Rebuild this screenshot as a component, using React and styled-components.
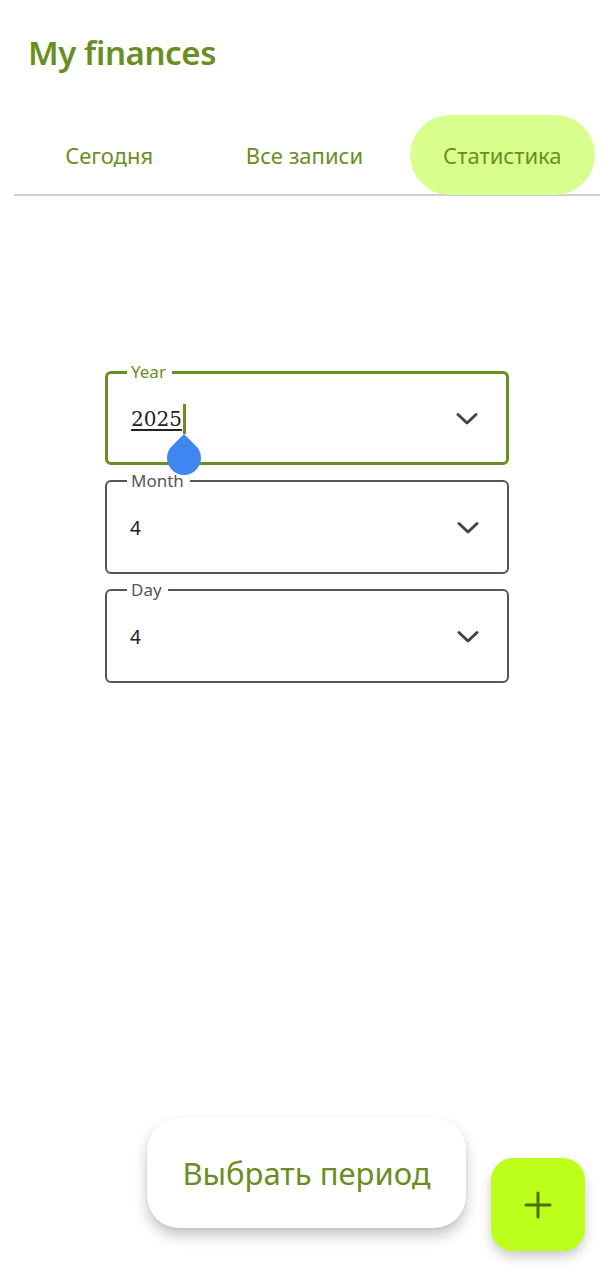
import styled, { createGlobalStyle } from 'styled-components';

const GlobalStyle = createGlobalStyle`
  html, body {
    margin: 0;
    padding: 0;
    background: #ffffff;
  }
  body {
    font-family: 'Noto Sans', 'Open Sans', sans-serif;
  }
`;

const olive = '#6b8e23';

const tabs = ['Сегодня', 'Все записи', 'Статистика'];

const fields = [
  { label: 'Year', value: '2025', focused: true },
  { label: 'Month', value: '4' },
  { label: 'Day', value: '4' },
];

const Chevron = () => (
  <svg width='22' height='14' viewBox='0 0 22 14'>
    <polyline
      points='2,2.5 11,11 20,2.5'
      fill='none'
      stroke='#444'
      strokeWidth='3'
      strokeLinecap='round'
      strokeLinejoin='round'
    />
  </svg>
);

const PlusIcon = () => (
  <svg width='28' height='28' viewBox='0 0 28 28'>
    <path d='M14 2v24M2 14h24' stroke='#4f6e12' strokeWidth='3' strokeLinecap='round' />
  </svg>
);

export default function App() {
  return (
    <>
      <GlobalStyle />
      <StyledPage>
        <StyledTitle>My finances</StyledTitle>
        <StyledTabs>
          {tabs.map((tab, i) => (
            <StyledTab key={tab} active={i === 2}>
              {tab}
            </StyledTab>
          ))}
        </StyledTabs>
        <StyledForm>
          {fields.map(field => (
            <StyledField key={field.label} focused={field.focused}>
              <StyledLegend focused={field.focused}>{field.label}</StyledLegend>
              <StyledFieldRow>
                {field.focused ? (
                  <StyledTyped>
                    {field.value}
                    <StyledCaret />
                    <StyledHandle />
                  </StyledTyped>
                ) : (
                  <StyledValue>{field.value}</StyledValue>
                )}
                <Chevron />
              </StyledFieldRow>
            </StyledField>
          ))}
        </StyledForm>
        <StyledFooter>
          <StyledPeriodButton>Выбрать период</StyledPeriodButton>
          <StyledFab aria-label='add'>
            <PlusIcon />
          </StyledFab>
        </StyledFooter>
      </StyledPage>
    </>
  );
}

const StyledPage = styled.div`
  min-height: 1280px;
  display: flex;
  flex-direction: column;
  box-sizing: border-box;
`;

const StyledTitle = styled.h1`
  margin: 29px 0 0 28px;
  font-size: 33px;
  line-height: 48px;
  font-weight: 600;
  color: ${olive};
  letter-spacing: -0.4px;
`;

const StyledTabs = styled.nav`
  margin: 37px 14px 0;
  display: grid;
  grid-template-columns: repeat(3, 1fr);
  border-bottom: 2px solid #cfcfcf;
`;

const StyledTab = styled.div`
  height: 80px;
  margin: 0 5px 0 ${({ active }) => (active ? '5px' : '0')};
  display: flex;
  align-items: center;
  justify-content: center;
  border-radius: 40px;
  background: ${({ active }) => (active ? '#d9ff8f' : 'transparent')};
  color: ${olive};
  font-size: 22px;
  position: relative;
  top: 1px;
`;

const StyledForm = styled.div`
  margin: 166px auto 0;
  width: 404px;
  display: flex;
  flex-direction: column;
  gap: 6px;
`;

const StyledField = styled.fieldset`
  margin: 0;
  padding: 0 24px 0 23px;
  height: 103px;
  box-sizing: border-box;
  border: ${({ focused }) => (focused ? `3px solid ${olive}` : '2px solid #555')};
  border-radius: 6px;
  min-width: 0;
`;

const StyledLegend = styled.legend`
  margin-left: ${({ focused }) => (focused ? '-4px' : '-3px')};
  padding: 0 6px 0 4px;
  font-size: 17px;
  line-height: 20px;
  color: ${({ focused }) => (focused ? olive : '#555')};
`;

const StyledFieldRow = styled.div`
  height: 73px;
  display: flex;
  align-items: center;
  justify-content: space-between;
  padding-right: 4px;
`;

const StyledValue = styled.span`
  font-size: 19px;
  color: #222;
`;

const StyledTyped = styled.span`
  position: relative;
  font-family: 'DejaVu Serif', 'Liberation Serif', serif;
  font-size: 20px;
  color: #222;
  text-decoration: underline;
  text-underline-offset: 3px;
`;

const StyledCaret = styled.span`
  position: absolute;
  right: -4px;
  top: -3px;
  width: 3px;
  height: 30px;
  background: ${olive};
`;

const StyledHandle = styled.span`
  position: absolute;
  right: -19px;
  top: 34px;
  width: 34px;
  height: 34px;
  border-radius: 0 50% 50% 50%;
  background: #3f86f0;
  transform: rotate(45deg);
`;

const StyledFooter = styled.div`
  margin-top: auto;
  display: flex;
  justify-content: flex-end;
  align-items: flex-end;
  gap: 25px;
  padding: 0 29px 29px 0;
`;

const StyledPeriodButton = styled.button`
  margin-bottom: 23px;
  width: 319px;
  height: 110px;
  border: none;
  border-radius: 32px;
  background: #ffffff;
  box-shadow: 0 8px 14px rgba(0, 0, 0, 0.22), 0 1px 3px rgba(0, 0, 0, 0.08);
  font-family: inherit;
  font-size: 31px;
  color: ${olive};
`;

const StyledFab = styled.button`
  width: 94px;
  height: 93px;
  border: none;
  border-radius: 22px;
  background: #bbff1a;
  box-shadow: 0 6px 12px rgba(0, 0, 0, 0.2);
  display: grid;
  place-items: center;
  padding: 0;
`;
